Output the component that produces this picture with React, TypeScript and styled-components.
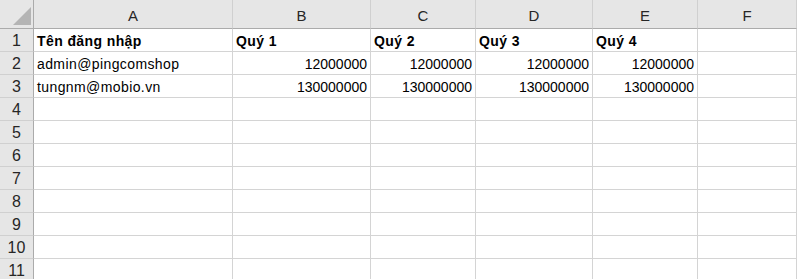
import React from "react";
import styled, { createGlobalStyle } from "styled-components";

const Global = createGlobalStyle`
  html, body { margin: 0; padding: 0; background: #fff; }
  body { font-family: "Liberation Sans", Arial, sans-serif; overflow: hidden; }
`;

const COLS = ["A", "B", "C", "D", "E", "F"];
const WIDTHS = ["34px", "199px", "138px", "105px", "117px", "105px", "1fr"];
const ROW_COUNT = 11;

type Cell = { v: string; num?: boolean; bold?: boolean };

const data: Cell[][] = [
  [
    { v: "Tên đăng nhập", bold: true },
    { v: "Quý 1", bold: true },
    { v: "Quý 2", bold: true },
    { v: "Quý 3", bold: true },
    { v: "Quý 4", bold: true },
  ],
  [
    { v: "admin@pingcomshop" },
    { v: "12000000", num: true },
    { v: "12000000", num: true },
    { v: "12000000", num: true },
    { v: "12000000", num: true },
  ],
  [
    { v: "tungnm@mobio.vn" },
    { v: "130000000", num: true },
    { v: "130000000", num: true },
    { v: "130000000", num: true },
    { v: "130000000", num: true },
  ],
];

const Sheet = styled.div`
  display: grid;
  grid-template-columns: ${WIDTHS.join(" ")};
  grid-template-rows: 29px repeat(${ROW_COUNT}, 23px);
  width: 797px;
  height: 279px;
  overflow: hidden;
`;

const Corner = styled.div`
  background: #e6e6e6;
  border-right: 1px solid #ababab;
  border-bottom: 1px solid #ababab;
  box-sizing: border-box;
  display: flex;
  align-items: flex-end;
  justify-content: flex-end;
  padding: 0 2px 3px 0;
`;

const ColHead = styled.div`
  background: #e6e6e6;
  border-right: 1px solid #d0d0d0;
  border-bottom: 1px solid #ababab;
  box-sizing: border-box;
  display: flex;
  align-items: center;
  justify-content: center;
  font-size: 15px;
  color: #262626;
  padding-top: 3px;
`;

const RowHead = styled.div`
  background: #e6e6e6;
  border-right: 1px solid #ababab;
  border-bottom: 1px solid #d0d0d0;
  box-sizing: border-box;
  display: flex;
  align-items: center;
  justify-content: center;
  font-size: 16px;
  color: #262626;
  padding-top: 1px;
`;

const DataCell = styled.div<{ $num?: boolean; $bold?: boolean }>`
  border-right: 1px solid #d4d4d4;
  border-bottom: 1px solid #d4d4d4;
  box-sizing: border-box;
  display: flex;
  align-items: center;
  justify-content: ${(p) => (p.$num ? "flex-end" : "flex-start")};
  padding: 1px 3px 0 3px;
  font-size: 14px;
  font-weight: ${(p) => (p.$bold ? 700 : 400)};
  letter-spacing: ${(p) => (p.$num ? "0" : "0.4px")};
  color: #000;
  white-space: nowrap;
  overflow: visible;
`;

const SelectAll = () => (
  <svg width="18" height="18" viewBox="0 0 18 18">
    <polygon points="0,18 18,18 18,0" fill="#b4b4b4" />
  </svg>
);

export default function App() {
  const rows = Array.from({ length: ROW_COUNT }, (_, i) => i);
  return (
    <>
      <Global />
      <Sheet>
        <Corner>
          <SelectAll />
        </Corner>
        {COLS.map((c) => (
          <ColHead key={c}>{c}</ColHead>
        ))}
        {rows.map((r) => (
          <React.Fragment key={r}>
            <RowHead>{r + 1}</RowHead>
            {COLS.map((c, ci) => {
              const cell = data[r]?.[ci];
              return (
                <DataCell key={c} $num={cell?.num} $bold={cell?.bold}>
                  {cell?.v ?? ""}
                </DataCell>
              );
            })}
          </React.Fragment>
        ))}
      </Sheet>
    </>
  );
}
